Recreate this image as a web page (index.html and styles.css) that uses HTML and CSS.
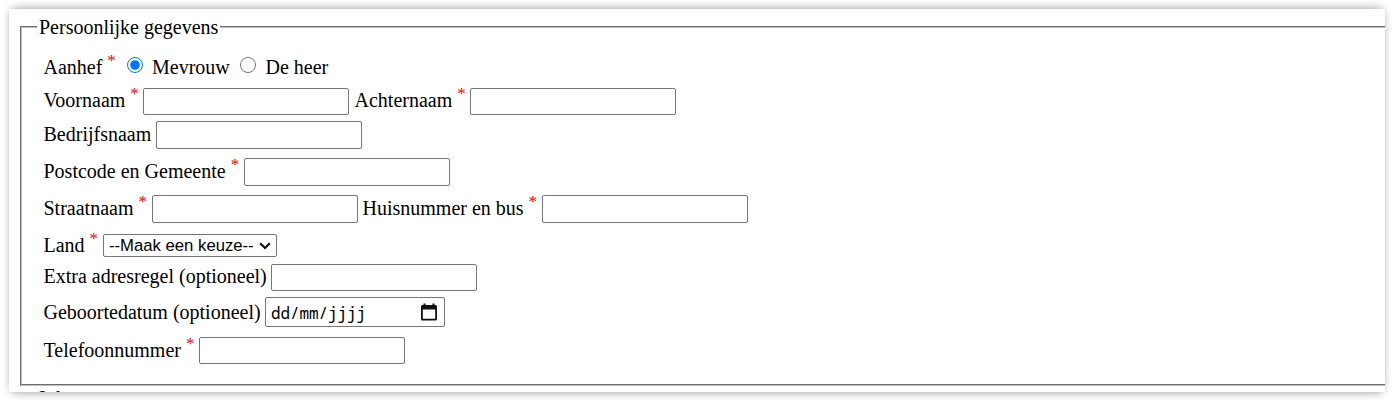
FILE: index.html
```html
<!DOCTYPE html>
<html lang="nl">
<head>
<meta charset="utf-8">
<title>Persoonlijke gegevens</title>
<link rel="stylesheet" href="styles.css">
</head>
<body>
<main class="panel">
<form class="form">
<fieldset class="group group-main">
<legend>Persoonlijke gegevens</legend>
<div class="row row-title"><span class="label w-aanhef">Aanhef <sup>*</sup></span><input class="radio" type="radio" name="title" id="mevr" checked><label class="label w-mevrouw" for="mevr">Mevrouw</label><input class="radio" type="radio" name="title" id="heer"><label class="label" for="heer">De heer</label></div>
<div class="row row-name"><label class="label w-voornaam" for="vn">Voornaam <sup>*</sup></label><input class="field short" id="vn"><label class="label w-achternaam" for="an">Achternaam <sup>*</sup></label><input class="field short" id="an"></div>
<div class="row"><label class="label w-bedrijf" for="bn">Bedrijfsnaam</label><input class="field" id="bn"></div>
<div class="row"><label class="label w-postcode" for="pc">Postcode en Gemeente <sup>*</sup></label><input class="field" id="pc"></div>
<div class="row"><label class="label w-straat" for="st">Straatnaam <sup>*</sup></label><input class="field" id="st"><label class="label w-huis" for="hn">Huisnummer en bus <sup>*</sup></label><input class="field" id="hn"></div>
<div class="row row-land"><label class="label w-land" for="la">Land <sup>*</sup></label><div class="select" id="la"><span>--Maak een keuze--</span><svg width="12" height="8" viewBox="0 0 12 8"><path d="M1.2 1.2 6 6 10.8 1.2" fill="none" stroke="#111" stroke-width="2.2"/></svg></div></div>
<div class="row row-extra"><label class="label w-extra" for="ex">Extra adresregel (optioneel)</label><input class="field short" id="ex"></div>
<div class="row row-date"><label class="label w-date" for="gd">Geboortedatum (optioneel)</label><div class="date" id="gd"><span>dd/mm/jjjj</span><svg width="16" height="18" viewBox="0 0 16 18"><path d="M1.5 2H2.5V.5h2V2h7V.5h2V2h1Q16 2 16 3.5v12.500Q16 17.500 14.500 17.500h-13Q0 17.500 0 16V3.500Q0 2 1.500 2zM1.800 6.500v9.300h12.400V6.500z" fill="#111" fill-rule="evenodd"/></svg></div></div>
<div class="row"><label class="label w-tel" for="te">Telefoonnummer <sup>*</sup></label><input class="field short tel" id="te"></div>
</fieldset>
<fieldset class="group">
<legend>Inl</legend>
</fieldset>
</form>
</main>
</body>
</html>
```
FILE: styles.css
```css
* { box-sizing: border-box; }
body { margin: 0; height: 400px; padding: 9px 8px 8px 9px; background: #fff; overflow: hidden; font: 20px/24px "Liberation Serif", "Times New Roman", serif; color: #000; }
.panel { height: 383px; overflow: hidden; background: #fff; box-shadow: 0 0 8px rgba(0,0,0,.12), 0 -5px 9px -4px rgba(0,0,0,.26), 0 5px 9px -4px rgba(0,0,0,.26); }
.form { width: 1400px; padding: 6px 0 0 11px; }
.group { margin: 0; padding: 0 21px; border: 2px groove #c0c0c0; }
.group-main { height: 371px; }
legend { margin-left: -6px; padding: 0 2px; height: 24px; }
.row { display: flex; align-items: flex-start; height: 37px; white-space: pre; }
.row-title { height: 33px; margin-top: 15px; }
.row-name, .row-extra { height: 34px; }
.row-land { height: 31px; }
.label { flex: none; line-height: 26px; text-indent: .5px; }
sup { display: inline-block; font-size: 17px; line-height: 16px; vertical-align: 8px; height: 16px; margin-top: -10px; color: #f00; text-indent: 0; }
.field { width: 206px; height: 28px; margin: 0; padding: 1px 2px; border: 1px solid #767676; border-radius: 2px; background: #fff; flex: none; }
.short { height: 27px; margin-top: 1px; }
.tel { margin-top: 0; }
.radio { flex: none; width: 16px; height: 16px; margin: 3px 9px 0 0; accent-color: #0075ff; }
.w-aanhef { width: 84px; }
.w-mevrouw { width: 88px; text-indent: 0; }
.w-voornaam { width: 100px; }
.w-achternaam { width: 121px; padding-left: 5px; }
.w-bedrijf { width: 113px; }
.w-postcode { width: 201px; }
.w-straat { width: 109px; }
.w-huis { width: 184px; padding-left: 4px; }
.w-land { width: 60px; }
.w-extra { width: 228px; }
.w-date { width: 222px; padding-top: 2px; }
.w-tel { width: 156px; }
.select { display: flex; align-items: center; justify-content: space-between; width: 174px; height: 23px; margin-top: 2px; padding: 0 5px; border: 1px solid #767676; border-radius: 2px; font: 16.7px/21px "Liberation Sans", Arial, sans-serif; }
.row-date { height: 40px; }
.date { display: flex; align-items: center; justify-content: space-between; width: 180px; height: 30px; padding: 0 7px 0 5px; border: 1px solid #767676; border-radius: 2px; font: 16px/28px "Noto Sans Mono", "DejaVu Sans Mono", monospace; }
.date span { padding-top: 1px; letter-spacing: -.1px; }
```
